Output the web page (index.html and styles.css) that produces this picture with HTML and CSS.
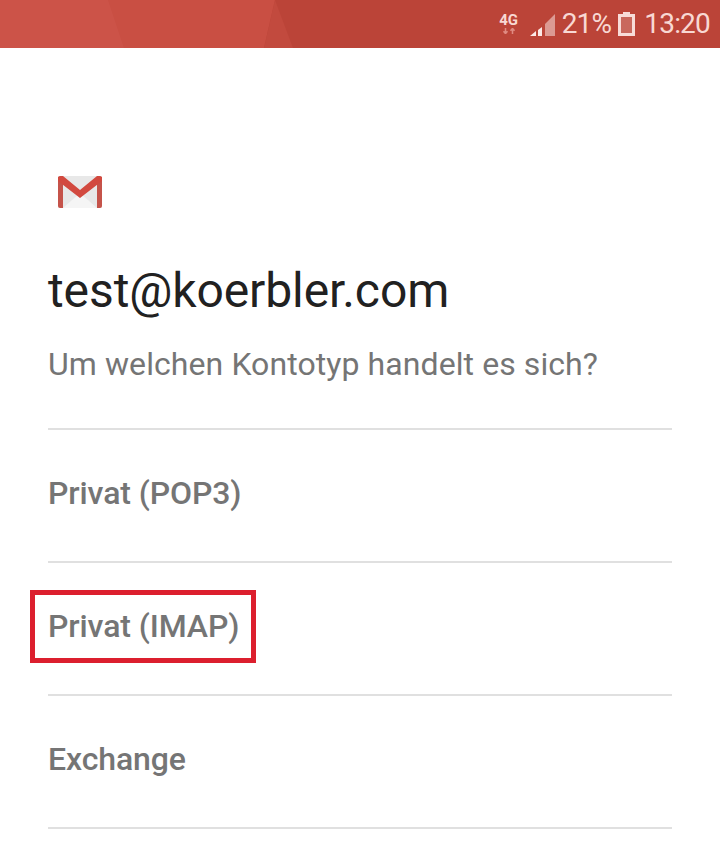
FILE: index.html

```html
<!DOCTYPE html>
<html lang="de">
<head>
    <meta charset="UTF-8">
    <title>Kontotyp</title>
    <link rel="stylesheet" href="styles.css">
</head>
<body>
    <div class="status-bar">
        <svg class="status-bg" width="720" height="48" viewBox="0 0 720 48">
            <rect width="720" height="48" fill="#bb4438"/>
            <polygon points="0,0 275,0 264,48 0,48" fill="#c94f43"/>
            <polygon points="0,0 108,0 124,48 0,48" fill="#cc5348"/>
            <polygon points="275,0 293,48 264,48" fill="#c24a3e"/>
        </svg>
        <div class="status-items">
            <div class="net">
                <span class="net-label">4G</span>
                <svg width="14" height="6" viewBox="0 0 14 6">
                    <path d="M3.5 0V5.5M1.5 3.2L3.5 5.6L5.5 3.2M10.5 6V.5M8.5 2.8L10.5 .4L12.5 2.8" stroke="#e08b82" stroke-width="1.5" fill="none"/>
                </svg>
            </div>
            <svg class="signal" width="26" height="24" viewBox="0 0 26 24">
                <polygon points="0,24 6,24 6,19" fill="#fbe9e6"/>
                <polygon points="8,24 12,24 12,15 8,18" fill="#fbe9e6"/>
                <polygon points="15,24 25,24 25,2 15,12" fill="#dc9a93"/>
            </svg>
            <span class="status-text">21%</span>
            <svg class="battery" width="17" height="24" viewBox="0 0 17 24">
                <path d="M5 0H12V2H17V24H0V2H5Z" fill="#f8dcd8"/>
                <rect x="3" y="5" width="11" height="16" fill="#c9685d"/>
            </svg>
            <span class="status-text">13:20</span>
        </div>
    </div>

    <main class="content">
        <svg class="gmail-icon" width="44" height="32" viewBox="0 0 44 32">
            <rect x="0" y="0" width="44" height="32" rx="2" fill="#e8e8e8"/>
            <polygon points="5,32 22,17 39,32" fill="#f5f5f5"/>
            <path d="M0 2Q0 0 3 0H5V32H2Q0 32 0 30Z" fill="#c5534a"/>
            <path d="M39 0H41Q44 0 44 2V30Q44 32 42 32H39Z" fill="#c5534a"/>
            <polygon points="0,1 3,0 5,0 22,14 39,0 41,0 44,1 44,5 22,22 0,5" fill="#d2493f"/>
        </svg>
        <h1 class="account">test@koerbler.com</h1>
        <p class="question">Um welchen Kontotyp handelt es sich?</p>
        <ul class="type-list">
            <li class="type-row">Privat (POP3)</li>
            <li class="type-row"><span class="marked">Privat (IMAP)</span></li>
            <li class="type-row">Exchange</li>
        </ul>
    </main>
</body>
</html>
```

FILE: styles.css

```css
body {
    margin: 0;
    background-color: #fff;
    font-family: Roboto, "Liberation Sans", sans-serif;
}

.status-bar {
    position: relative;
    height: 48px;
    overflow: hidden;
}

.status-bg {
    position: absolute;
    top: 0;
    left: 0;
}

.status-items {
    position: relative;
    display: flex;
    justify-content: flex-end;
    align-items: center;
    height: 48px;
    padding-right: 10px;
    color: #f8d8d3;
}

.net {
    display: flex;
    flex-direction: column;
    align-items: center;
    width: 22px;
    margin-right: 10px;
}

.net-label {
    font-size: 15px;
    font-weight: 700;
    line-height: 13px;
}

.net svg {
    display: block;
    margin-top: 1px;
}

.signal {
    margin-right: 6px;
}

.status-text {
    font-size: 28px;
    line-height: 48px;
    letter-spacing: -0.8px;
}

.battery {
    margin: 0 9px 0 7px;
}

.content {
    padding: 128px 48px 0;
}

.gmail-icon {
    display: block;
    margin-left: 10px;
}

.account {
    margin: 53px 0 0;
    font-size: 48px;
    font-weight: 400;
    line-height: 60px;
    letter-spacing: -0.1px;
    color: #212121;
}

.question {
    margin: 23px 0 0;
    font-size: 32px;
    line-height: 40px;
    letter-spacing: 0.08px;
    color: #757575;
}

.type-list {
    margin: 44px 0 0;
    padding: 0;
    list-style: none;
    border-top: 2px solid #e0e0e0;
}

.type-row {
    display: flex;
    align-items: center;
    height: 125px;
    padding-bottom: 6px;
    border-bottom: 2px solid #e0e0e0;
    font-size: 32px;
    font-weight: 500;
    letter-spacing: -0.1px;
    color: #757575;
}

.marked {
    position: relative;
}

.marked::after {
    content: "";
    position: absolute;
    top: -17px;
    bottom: -18px;
    left: -18px;
    right: -17px;
    border: 5px solid #dc1f2e;
}
```
